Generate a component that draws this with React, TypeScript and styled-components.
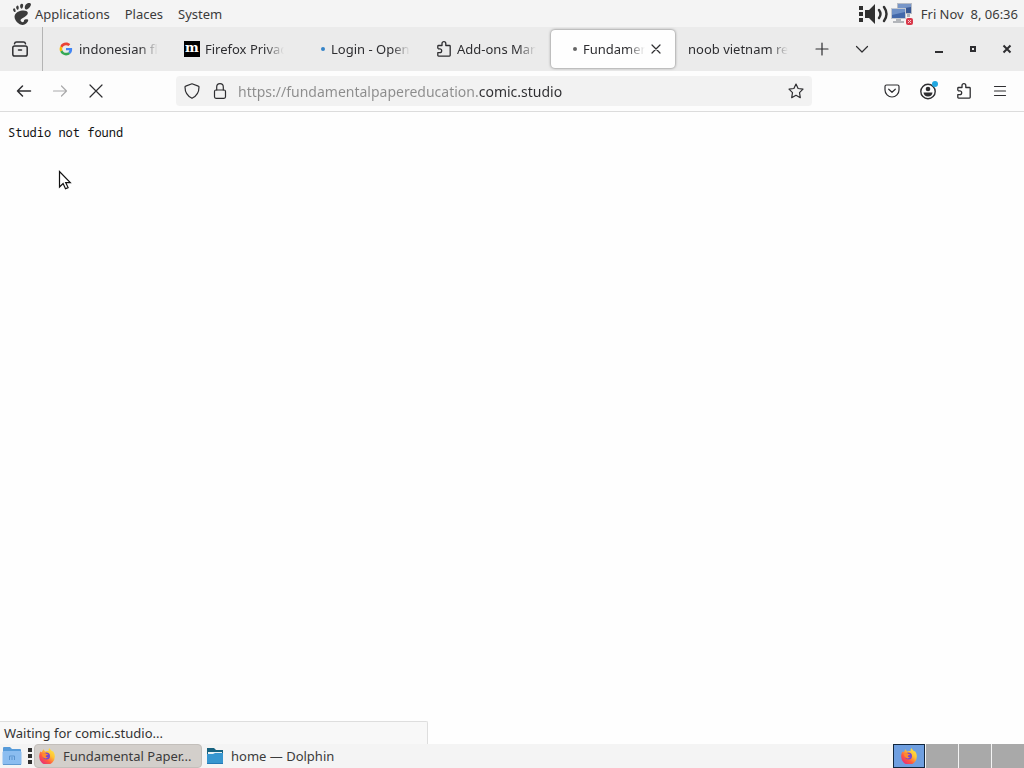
import React from "react";
import styled, { createGlobalStyle } from "styled-components";
import { SiGnome } from "react-icons/si";

const GlobalStyle = createGlobalStyle`
  *, *::before, *::after { box-sizing: border-box; }
  body {
    margin: 0;
    background: #fefefe;
    color: #2e2e31;
    font: 13px/18px "Noto Sans", sans-serif;
    overflow: hidden;
  }
  button, input { font: inherit; color: inherit; }
  button { border: 0; padding: 0; background: transparent; }
`;

const Desktop = styled.div`
  display: flex;
  flex-direction: column;
  min-height: 100vh;
`;

const Panel = styled.header`
  display: flex;
  align-items: center;
  height: 27px;
  padding: 0 6px 0 11px;
  background: #f4f4f4;
  color: #3b3b3b;
`;

const PanelMenu = styled.nav`
  display: flex;
  align-items: center;
  gap: 15px;
`;

const MenuButton = styled.button`
  display: flex;
  align-items: center;
  gap: 2px;
  height: 26px;
  white-space: nowrap;
`;

const Tray = styled.div`
  display: flex;
  align-items: center;
  gap: 1px;
  margin-left: auto;
`;

const Clock = styled.time`
  padding-left: 7px;
  white-space: pre;
`;

const TabStrip = styled.div`
  display: flex;
  align-items: center;
  height: 44px;
  background: #ebebeb;
`;

const ViewCell = styled.div`
  display: flex;
  align-items: center;
  justify-content: center;
  align-self: stretch;
  width: 43px;
  padding-right: 2px;
  margin-right: 3px;
  border-right: 1px solid #b4b4b4;
`;

const TabList = styled.div`
  display: flex;
`;

const Tab = styled.div<{ $active?: boolean }>`
  display: flex;
  align-items: center;
  gap: 5px;
  width: 124px;
  height: 38px;
  margin: 0 1px;
  padding: 0 11px;
  border-radius: 4px;
  background: ${(p) => (p.$active ? "#fefefe" : "transparent")};
  box-shadow: ${(p) => (p.$active ? "0 0 3px rgba(0, 0, 0, 0.55)" : "none")};
`;

const TabLabel = styled.button`
  flex: 1;
  min-width: 0;
  overflow: hidden;
  text-align: left;
  white-space: nowrap;
  mask-image: linear-gradient(to left, transparent 2px, black 20px);
`;

const TabClose = styled.button`
  display: flex;
  width: 16px;
  margin-left: -4px;
`;

const StripButton = styled.button`
  display: flex;
  align-items: center;
  justify-content: center;
  width: 40px;
  height: 36px;
`;

const WindowControls = styled.div`
  display: flex;
  margin-left: auto;
`;

const WindowButton = styled.button`
  display: flex;
  align-items: center;
  justify-content: center;
  width: 34px;
  height: 36px;
`;

const NavBar = styled.div`
  display: flex;
  align-items: center;
  height: 41px;
  padding: 0 6px;
  background: #fdfdfd;
  border-bottom: 1px solid #dcdcdc;
`;

const ToolButton = styled.button<{ $dim?: boolean }>`
  display: flex;
  align-items: center;
  justify-content: center;
  width: 36px;
  height: 32px;
  opacity: ${(p) => (p.$dim ? 0.4 : 1)};
`;

const UrlBar = styled.div`
  display: flex;
  flex: 1;
  align-items: center;
  height: 30px;
  min-width: 0;
  margin: 0 62px;
  padding: 0 2px;
  border-radius: 4px;
  background: #f2f2f2;
`;

const UrlButton = styled.button`
  display: flex;
  align-items: center;
  justify-content: center;
  width: 28px;
  height: 28px;
`;

const UrlInput = styled.input`
  flex: 1;
  min-width: 0;
  height: 28px;
  margin-left: 4px;
  padding: 0;
  border: 0;
  outline: 0;
  font-size: 14px;
  background: linear-gradient(to right, #8c8c8c 240px, #2e2e31 240px);
  background-clip: text;
  -webkit-background-clip: text;
  -webkit-text-fill-color: transparent;
`;

const Page = styled.main`
  position: relative;
  flex: 1;
  padding: 12px 8px;
  background: #fefefe;
  color: #111;
`;

const Message = styled.pre`
  margin: 0;
  font: 12px/18px "Noto Sans Mono", "DejaVu Sans Mono", monospace;
`;

const StatusBubble = styled.div`
  position: absolute;
  left: 0;
  bottom: 0;
  width: 428px;
  height: 23px;
  padding: 2px 4px;
  border: 1px solid #dedede;
  border-width: 1px 1px 0 0;
  border-radius: 0 2px 0 0;
  background: #f8f8f8;
  color: #333;
`;

const Pointer = styled.svg`
  position: absolute;
  left: 58px;
  top: 58px;
`;

const Taskbar = styled.footer`
  display: flex;
  align-items: center;
  height: 24px;
  padding-left: 2px;
  background: #f4f4f4;
  color: #3b3b3b;
`;

const Launcher = styled.button`
  display: flex;
  margin-right: 6px;
`;

const Task = styled.button<{ $active?: boolean }>`
  display: flex;
  align-items: center;
  gap: 8px;
  width: 168px;
  height: 24px;
  margin-left: 2px;
  padding: 0 ${(p) => (p.$active ? 4 : 3)}px;
  border: ${(p) => (p.$active ? "1px solid #c3bfbb" : "0")};
  border-radius: 4px;
  background: ${(p) => (p.$active ? "#d3cfcb" : "transparent")};
  white-space: nowrap;
`;

const Pager = styled.div`
  display: flex;
  gap: 1px;
  height: 24px;
  margin-left: auto;
`;

const Workspace = styled.button<{ $active?: boolean }>`
  display: flex;
  align-items: center;
  justify-content: center;
  width: 32px;
  height: 24px;
  border: ${(p) => (p.$active ? "1px solid #12283f" : "0")};
  background: ${(p) => (p.$active ? "#6f9fe0" : "#a9a9a9")};
`;

const MozillaMark = styled.span`
  flex: none;
  width: 16px;
  height: 16px;
  background: #000;
  color: #fff;
  font: bold 13px/14px "DejaVu Serif", serif;
  text-align: center;
`;

const Loading = styled.span<{ $color: string }>`
  flex: none;
  width: 16px;
  display: flex;
  justify-content: flex-end;
  &::after {
    content: "";
    width: 4px;
    height: 4px;
    margin-right: 1px;
    border-radius: 50%;
    background: ${(p) => p.$color};
  }
`;

type IconProps = { children: React.ReactNode; width?: number };

const Icon = ({ children, width = 1.2 }: IconProps) => (
  <svg
    width="16"
    height="16"
    viewBox="0 0 16 16"
    fill="none"
    stroke="currentColor"
    strokeWidth={width}
    strokeLinecap="round"
    strokeLinejoin="round"
    style={{ flex: "none" }}
    aria-hidden="true"
  >
    {children}
  </svg>
);

const PuzzleIcon = () => (
  <Icon width={1.3}>
    <path d="M1.800 7.200V5.300q0-.8.800-.8h3.400V2.600a1.900 1.900 0 0 1 3.800 0v1.900h3.600q.8 0 .8.8v9q0 .8-.8.8H2.600q-.8 0-.8-.8v-2.600h2a1.900 1.900 0 0 0 0-3.800H2.600" />
  </Icon>
);

const CloseIcon = () => (
  <Icon>
    <path d="M4 4l8 8M12 4l-8 8" />
  </Icon>
);

const GoogleIcon = () => (
  <svg width="16" height="16" viewBox="-6 -6 60 60" style={{ flex: "none" }} aria-hidden="true">
    <path fill="#EA4335" d="M24 9.500c3.540 0 6.710 1.220 9.210 3.600l6.850-6.850C35.900 2.380 30.470 0 24 0 14.620 0 6.510 5.380 2.560 13.220l7.980 6.190C12.430 13.720 17.740 9.500 24 9.500z" />
    <path fill="#4285F4" d="M46.980 24.550c0-1.570-.15-3.090-.38-4.550H24v9.020h12.940c-.58 2.960-2.260 5.480-4.780 7.180l7.730 6c4.510-4.180 7.090-10.360 7.090-17.650z" />
    <path fill="#FBBC05" d="M10.530 28.590A14.500 14.500 0 0 1 9.770 24c0-1.600.27-3.140.76-4.590l-7.980-6.190A24 24 0 0 0 0 24c0 3.880.92 7.540 2.560 10.780z" />
    <path fill="#34A853" d="M24 48c6.480 0 11.930-2.130 15.890-5.810l-7.730-6c-2.150 1.450-4.920 2.300-8.160 2.300-6.260 0-11.570-4.220-13.470-9.910l-7.980 6.190C6.510 42.620 14.620 48 24 48z" />
  </svg>
);

const FirefoxIcon = ({ id }: { id: string }) => (
  <svg width="16" height="16" viewBox="0 0 16 16" style={{ flex: "none" }} aria-hidden="true">
    <defs>
      <linearGradient id={id} x1="1" y1="0" x2="0.200" y2="1">
        <stop offset="0" stopColor="#fff04a" />
        <stop offset="0.400" stopColor="#ffc233" />
        <stop offset="0.700" stopColor="#ff5a3e" />
        <stop offset="1" stopColor="#e52882" />
      </linearGradient>
    </defs>
    <path fill={`url(#${id})`} d="M1.500 3.500C2 3.800 2.600 4.100 3 4.200 3.200 3.100 4 2 4.900 1.300c.1 1 .8 1.900 1.700 2.300C7.800 3 9.200 3 9.900 3.300 9.300 2.200 9.600.8 10.400 0c.5 1.600 2 2.200 3 3.500.3-.2.300-.5.300-.8 1.300 1.600 2.300 3.800 2.100 6A7.800 7.800 0 0 1 .2 9C.1 7 .6 5 1.500 3.500z" />
    <circle cx="7.500" cy="8" r="3.500" fill="#7947cf" />
    <path fill="#ff8b2d" d="M3.200 6.300c1.600-1.500 3.200-1.500 4.300-.4l1.500.1c-.2 1.100-1.500 1-2 1.800-.5.900.3 1.700 2 1.200-1 1.800-3.700 1.800-4.900.3-.7-1-1.100-1.700-.9-3z" />
  </svg>
);

const FolderIcon = () => (
  <svg width="16" height="16" viewBox="0 0 16 16" style={{ flex: "none" }} aria-hidden="true">
    <path fill="#17627f" d="M0 0h7l2 2h7v6H0z" />
    <path fill="#e7f1f5" d="M1 4h14v2H1z" />
    <path fill="#3796cf" d="M0 6h6l2-1h8v11H0z" />
    <path fill="#2479b5" d="M0 15h16v1H0z" />
  </svg>
);

const HomeFolderIcon = () => (
  <svg width="20" height="20" viewBox="0 0 20 20" aria-hidden="true">
    <path fill="#579bd9" d="M1 2q0-1 1-1h6l2 2h8q1 0 1 1v8H1z" />
    <rect x="0.500" y="5" width="19" height="14" rx="1.500" fill="#8bbdf0" />
    <path fill="none" stroke="#5a94cf" d="M7.500 14V10h5v4M10 11v3" />
    <path stroke="#6099d0" d="M1 18.500h18" />
  </svg>
);

const HandleIcon = () => (
  <svg width="4" height="16" viewBox="0 0 4 16" fill="#303030" aria-hidden="true">
    <path d="M0 0h4v4H0zM0 6h4v4H0zM0 12h4v4H0z" />
  </svg>
);

const VolumeIcon = () => (
  <svg width="26" height="20" viewBox="0 0 26 20" aria-hidden="true">
    <path fill="#303030" d="M1 6h4l6-6v20l-6-6H1z" />
    <path fill="none" stroke="#303030" strokeWidth="2.400" strokeLinecap="round" d="M15 6q3 4 0 8M20 3q5 7 0 14" />
  </svg>
);

const NetworkIcon = () => (
  <svg width="22" height="22" viewBox="0 0 22 22" aria-hidden="true">
    <rect x="6" y="0" width="15" height="11" fill="#b7bcc5" />
    <rect x="7" y="1" width="13" height="9" fill="#385894" />
    <path fill="#7896c8" d="M7 1h13v3L7 6z" />
    <path fill="#aab0b8" d="M16 11h3v3h-3z" />
    <rect x="0" y="5" width="15" height="11" fill="#c3c8d0" />
    <rect x="1" y="6" width="13" height="9" fill="#4268aa" />
    <path fill="#6f91c7" d="M1 6h13v3L1 12z" />
    <path fill="#b3b6bb" d="M5 16h5v2h3v2H2v-2h3z" />
    <rect x="15" y="15" width="7" height="7" rx="2" fill="#d8394b" />
    <path stroke="#f6c4ca" d="M17 17l3 3M20 17l-3 3" />
  </svg>
);

type TabData = { title: string; icon?: React.ReactNode; active?: boolean };

const tabs: TabData[] = [
  { title: "indonesian fl", icon: <GoogleIcon /> },
  { title: "Firefox Privac", icon: <MozillaMark aria-hidden="true">m</MozillaMark> },
  { title: "Login - Open", icon: <Loading $color="#3584c8" /> },
  { title: "Add-ons Man", icon: <PuzzleIcon /> },
  { title: "Fundamen", icon: <Loading $color="#666" />, active: true },
  { title: "noob vietnam re" },
];

export default function App() {
  return (
    <Desktop>
      <GlobalStyle />
      <Panel>
        <PanelMenu>
          <MenuButton><SiGnome size={22} />Applications</MenuButton>
          <MenuButton>Places</MenuButton>
          <MenuButton>System</MenuButton>
        </PanelMenu>
        <Tray>
          <HandleIcon />
          <VolumeIcon />
          <NetworkIcon />
          <Clock>Fri Nov  8, 06:36</Clock>
        </Tray>
      </Panel>

      <TabStrip>
        <ViewCell>
          <StripButton aria-label="Firefox View">
            <Icon width={1.5}>
              <rect x="0.800" y="5" width="14.400" height="10" rx="1.800" />
              <path d="M2.500 2.800Q2.800 1 4.500 1h7q1.700 0 2 1.800M6.500 9h3" />
            </Icon>
          </StripButton>
        </ViewCell>
        <TabList>
          {tabs.map((tab) => (
            <Tab key={tab.title} $active={tab.active}>
              {tab.icon}
              <TabLabel>{tab.title}</TabLabel>
              {tab.active && <TabClose aria-label="Close tab"><CloseIcon /></TabClose>}
            </Tab>
          ))}
        </TabList>
        <StripButton aria-label="New tab">
          <Icon><path d="M8 2v12M2 8h12" /></Icon>
        </StripButton>
        <StripButton aria-label="List all tabs">
          <Icon><path d="M2.500 5.500L8 11l5.500-5.500" /></Icon>
        </StripButton>
        <WindowControls>
          <WindowButton aria-label="Minimize">
            <Icon width={2}><path strokeLinecap="butt" d="M4 11h8" /></Icon>
          </WindowButton>
          <WindowButton aria-label="Restore">
            <Icon width={2}><path strokeLinejoin="miter" d="M6 6h4v4H6z" /></Icon>
          </WindowButton>
          <WindowButton aria-label="Close">
            <Icon width={2}><path strokeLinecap="butt" d="M4.500 4.500l7 7M11.500 4.500l-7 7" /></Icon>
          </WindowButton>
        </WindowControls>
      </TabStrip>

      <NavBar>
        <ToolButton aria-label="Back">
          <Icon width={1.500}><path d="M14.500 8h-13M6.500 3l-5 5 5 5" /></Icon>
        </ToolButton>
        <ToolButton aria-label="Forward" $dim>
          <Icon><path d="M1.500 8h13M9.500 3l5 5-5 5" /></Icon>
        </ToolButton>
        <ToolButton aria-label="Stop">
          <Icon><path d="M2 2l12 12M14 2L2 14" /></Icon>
        </ToolButton>
        <UrlBar>
          <UrlButton aria-label="Tracking protection">
            <Icon><path d="M8 .8l6.300 2.300q.7.200.7 1C15 10 12 13.500 8 15.300 4 13.500 1 10 1 4.100q0-.8.7-1z" /></Icon>
          </UrlButton>
          <UrlButton aria-label="Site information">
            <Icon>
              <rect x="2.500" y="7" width="11" height="8.300" rx="1.500" />
              <path d="M4.700 7V4a3.300 3.300 0 0 1 6.600 0v3" />
            </Icon>
          </UrlButton>
          <UrlInput aria-label="Address" defaultValue="https://fundamentalpapereducation.comic.studio" />
          <UrlButton aria-label="Bookmark this page">
            <Icon><path d="M8 1l2.100 4.500 4.900.7-3.500 3.500.8 5L8 12.300l-4.300 2.400.8-5L1 6.200l4.900-.7z" /></Icon>
          </UrlButton>
        </UrlBar>
        <ToolButton aria-label="Save to Pocket">
          <Icon>
            <path d="M2.500 2h11q1.500 0 1.500 1.500V7A7 7 0 0 1 1 7V3.500Q1 2 2.500 2z" />
            <path d="M4.700 6.200L8 9.300l3.300-3.100" />
          </Icon>
        </ToolButton>
        <ToolButton aria-label="Account">
          <svg width="20" height="20" viewBox="0 0 20 20" aria-hidden="true">
            <circle cx="10" cy="10.500" r="7.200" fill="none" stroke="currentColor" strokeWidth="1.400" />
            <circle cx="10" cy="8" r="2.300" fill="currentColor" />
            <path fill="currentColor" d="M5.500 11.500h9q-.5 4-4.500 4t-4.500-4z" />
            <circle cx="17" cy="3" r="3" fill="#22a7e0" />
          </svg>
        </ToolButton>
        <ToolButton aria-label="Extensions"><PuzzleIcon /></ToolButton>
        <ToolButton aria-label="Open application menu">
          <Icon><path d="M2.500 3.500h11M2.500 8h11M2.500 12.500h11" /></Icon>
        </ToolButton>
      </NavBar>

      <Page>
        <Message>Studio not found</Message>
        <Pointer width="14" height="22" viewBox="0 0 14 22" aria-hidden="true">
          <path fill="#fff" stroke="#111" strokeWidth="1.200" d="M1.500 1.500v15.500l3.600-3.400 2.400 5.200 2.600-1.200-2.400-5h4.600z" />
        </Pointer>
        <StatusBubble role="status">Waiting for comic.studio...</StatusBubble>
      </Page>

      <Taskbar>
        <Launcher aria-label="Show desktop"><HomeFolderIcon /></Launcher>
        <HandleIcon />
        <Task $active><FirefoxIcon id="flame-task" />Fundamental Paper...</Task>
        <Task><FolderIcon />home — Dolphin</Task>
        <Pager>
          <Workspace $active aria-label="Workspace 1"><FirefoxIcon id="flame-pager" /></Workspace>
          <Workspace aria-label="Workspace 2" />
          <Workspace aria-label="Workspace 3" />
          <Workspace aria-label="Workspace 4" />
        </Pager>
      </Taskbar>
    </Desktop>
  );
}
